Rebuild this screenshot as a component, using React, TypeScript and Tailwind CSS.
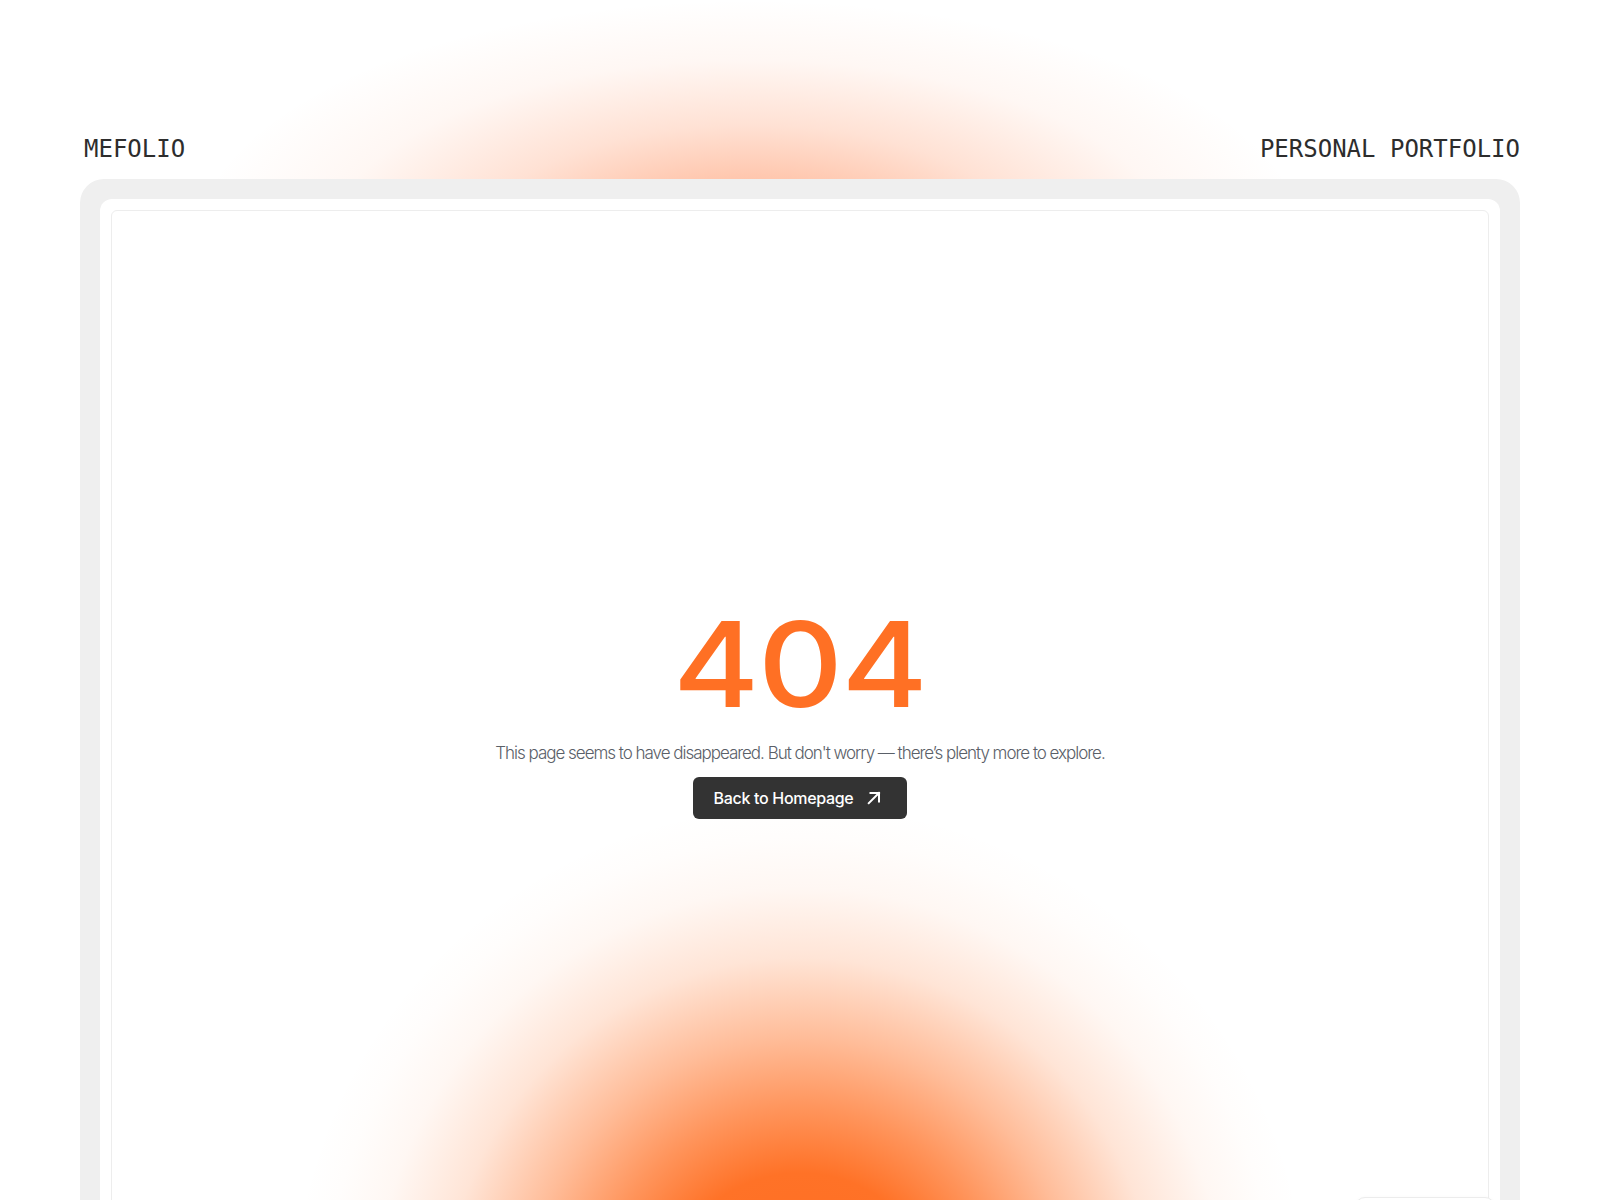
import React from "react";

function ArrowUpRight() {
  return (
    <svg width="14" height="14" viewBox="0 0 14 14" fill="none" stroke="currentColor" strokeWidth="2" strokeLinecap="square">
      <path d="M1.8 12.2 L12 2" />
      <path d="M3.5 2 H12 V10.5" />
    </svg>
  );
}

export default function App() {
  return (
    <div className="relative min-h-screen overflow-hidden bg-white font-['Inter',sans-serif]">
      <div className="pointer-events-none absolute left-0 top-0 h-[300px] w-full bg-[radial-gradient(ellipse_560px_250px_at_750px_250px,rgba(255,120,60,0.5)_0%,rgba(255,120,60,0.46)_24%,rgba(255,120,60,0.22)_50%,rgba(255,120,60,0.06)_76%,rgba(255,120,60,0)_100%)]" />
      <header className="relative flex items-start justify-between pb-[18px] pl-[84px] pr-20 pt-[137px] font-['DejaVu_Sans_Mono',monospace] text-[24px] leading-none text-[#2d2d2d]">
        <span>MEFOLIO</span>
        <span>PERSONAL PORTFOLIO</span>
      </header>
      <main className="relative mx-20 rounded-[24px] bg-[#efefef] p-5">
        <div className="rounded-xl bg-white p-[11px]">
          <div className="relative flex h-[1004px] flex-col items-center justify-center overflow-hidden rounded-md border border-[#ededed]">
            <div className="pointer-events-none absolute inset-0 bg-[radial-gradient(circle_at_50%_1102px,#ff6c20_0px,#ff7227_140px,rgba(255,122,51,0.8)_205px,rgba(255,122,51,0.5)_275px,rgba(255,122,51,0.2)_355px,rgba(255,122,51,0.06)_425px,rgba(255,122,51,0.015)_475px,rgba(255,122,51,0)_510px)]" />
            <div className="relative flex flex-col items-center">
              <h1 className="scale-x-[1.115] text-[118px] font-medium leading-none tracking-[-0.01em] text-[#ff7024]">404</h1>
              <p className="mt-[17px] text-[17px] font-light leading-[27px] tracking-[-0.06em] text-[#5a6068]">
                This page seems to have disappeared. But don't worry — there’s plenty more to explore.
              </p>
              <a
                href="#"
                className="mt-[10px] flex h-[42px] items-center gap-[14px] rounded-[6px] bg-[#333333] pl-[21px] pr-[26px] text-[16px] font-medium tracking-[-0.02em] text-white"
              >
                <span>Back to Homepage</span>
                <ArrowUpRight />
              </a>
            </div>
          </div>
        </div>
      </main>
      <div className="absolute left-[1355px] top-[1197px] h-[44px] w-[140px] rounded-[10px] border border-[#ececec] bg-white shadow-[0_1px_4px_rgba(0,0,0,0.04)]" />
    </div>
  );
}
